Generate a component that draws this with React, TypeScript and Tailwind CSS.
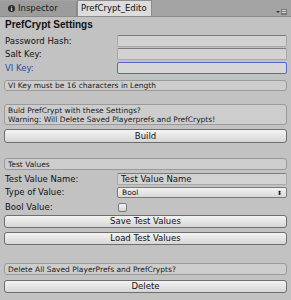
import React from "react";

const font = { fontFamily: '"DejaVu Sans", Verdana, sans-serif' };

function Field({ children, blue }: { children?: React.ReactNode; blue?: boolean }) {
  return (
    <div
      className={
        "w-[170px] h-[12px] rounded-[2px] flex items-center px-[3px] text-[8.5px] leading-none text-[#111] " +
        (blue
          ? "bg-[#d6d6d6] border border-[#5468c8]"
          : "bg-[#d2d2d2] border border-[#a8a8a8] border-t-[#7c7c7c]")
      }
    >
      {children}
    </div>
  );
}

function Row({ label, children, blue, className }: { label: string; children: React.ReactNode; blue?: boolean; className?: string }) {
  return (
    <div className={"flex items-center " + (className || "")}>
      <div className={"w-[112px] text-[8.5px] leading-none " + (blue ? "text-[#3448a8]" : "text-[#111]")}>{label}</div>
      {children}
    </div>
  );
}

function Help({ children, className }: { children: React.ReactNode; className?: string }) {
  return (
    <div
      className={
        "w-[283px] bg-[#cdcdcd] border border-[#9a9a9a] rounded-[3px] px-[3px] text-[7.5px] leading-[9px] text-[#1a1a1a] flex flex-col justify-center " +
        (className || "")
      }
    >
      {children}
    </div>
  );
}

function Button({ children, className }: { children: React.ReactNode; className?: string }) {
  return (
    <div
      className={
        "w-[283px] h-[13px] rounded-[3px] border border-[#6e6e6e] bg-gradient-to-b from-[#f4f4f4] to-[#d6d6d6] flex items-center justify-center text-[8.5px] leading-none text-[#111] " +
        (className || "")
      }
    >
      {children}
    </div>
  );
}

export default function App() {
  return (
    <div className="w-[291px] h-[300px] bg-[#c2c2c2] overflow-hidden relative" style={font}>
      <div className="h-[17px] bg-[#a4a4a4] flex items-end relative border-b border-[#8c8c8c]">
        <div className="w-[77px] h-[15px] bg-[#9c9c9c] border-r border-[#888] flex items-center pl-[8px] gap-[3px] text-[8.5px] text-[#1a1a1a]">
          <span className="w-[7px] h-[7px] rounded-full bg-[#2a2a2a] text-[#ddd] text-[6px] leading-[7px] text-center font-bold">i</span>
          <span>Inspector</span>
        </div>
        <div className="w-[75px] h-[16px] bg-[#dcdcdc] border-x border-t border-[#8c8c8c] flex items-center pl-[3px] text-[8.5px] text-[#111] overflow-hidden whitespace-nowrap">
          PrefCrypt_Edito
        </div>
        <svg className="absolute right-[4px] top-[9px]" width="11" height="6" viewBox="0 0 11 6">
          <path d="M0 2 L4 2 L2 4 Z" fill="#333" />
          <rect x="5" y="0" width="6" height="6" fill="#777" />
          <rect x="6" y="1" width="4" height="1" fill="#ddd" />
          <rect x="6" y="3" width="4" height="1" fill="#ddd" />
        </svg>
      </div>
      <div className="pl-[5px] pt-[1px] flex flex-col">
        <div
          className="h-[12px] flex items-center text-[10px] font-bold text-[#111]"
          style={{ fontFamily: '"Liberation Sans", Arial, sans-serif' }}
        >
          PrefCrypt Settings
        </div>
        <Row label="Password Hash:" className="mt-[5px] h-[12px]"><Field /></Row>
        <Row label="Salt Key:" className="mt-[1px] h-[12px]"><Field /></Row>
        <Row label="VI Key:" blue className="mt-[2px] h-[12px]"><Field blue /></Row>
        <Help className="-ml-[1px] mt-[6px] h-[11px]">VI Key must be 16 characters in Length</Help>
        <Help className="-ml-[1px] mt-[13px] h-[21px]">
          <div>Buld PrefCrypt with these Settings?</div>
          <div>Warning: Will Delete Saved Playerprefs and PrefCrypts!</div>
        </Help>
        <Button className="-ml-[1px] mt-[4px] h-[14px]">Build</Button>
        <Help className="-ml-[1px] mt-[15px] h-[12px]">Test Values</Help>
        <Row label="Test Value Name:" className="mt-[3px] h-[12px]"><Field>Test Value Name</Field></Row>
        <Row label="Type of Value:" className="mt-[2px] h-[11px]">
          <div className="w-[170px] h-[11px] rounded-[2px] border border-[#7a7a7a] bg-gradient-to-b from-[#f2f2f2] to-[#d8d8d8] flex items-center justify-between px-[4px] text-[7.5px] leading-none text-[#111]">
            <span>Bool</span>
            <span className="text-[6px]">⬍</span>
          </div>
        </Row>
        <Row label="Bool Value:" className="mt-[3px] h-[12px]">
          <div className="w-[9px] h-[9px] ml-[1px] rounded-[2px] border border-[#7a7a7a] bg-gradient-to-b from-[#f2f2f2] to-[#d4d4d4]" />
        </Row>
        <Button className="-ml-[1px] mt-[2px]">Save Test Values</Button>
        <Button className="-ml-[1px] mt-[4px]">Load Test Values</Button>
        <Help className="-ml-[1px] mt-[18px] h-[12px]">Delete All Saved PlayerPrefs and PrefCrypts?</Help>
        <Button className="-ml-[1px] mt-[5px]">Delete</Button>
      </div>
    </div>
  );
}
